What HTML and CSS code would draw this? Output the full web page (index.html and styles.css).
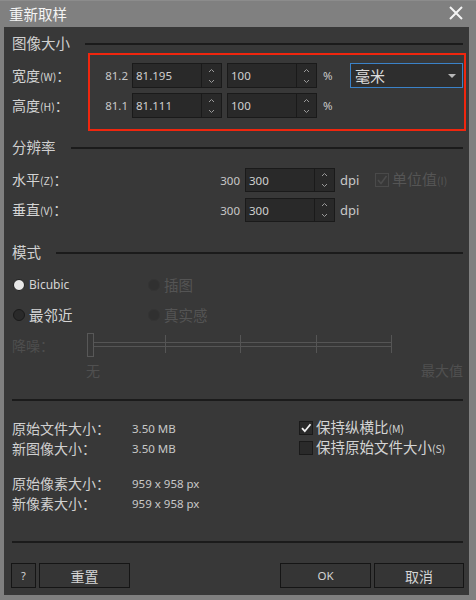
FILE: index.html
```html
<!DOCTYPE html>
<html lang="zh-CN">
<head>
<meta charset="utf-8">
<title>重新取样</title>
<link rel="stylesheet" href="styles.css">
</head>
<body>
<div class="window">
  <div class="titlebar">
    <span class="title">重新取样</span>
    <svg class="close" width="14" height="14" viewBox="0 0 14 14"><path d="M1 1 L13 13 M13 1 L1 13" stroke="#f4f4f4" stroke-width="2" fill="none"/></svg>
  </div>
  <div class="panel">
    <section class="sec sec-size">
      <div class="sec-head">图像大小</div>
      <div class="row row-size first">
        <div class="lbl lbl-size">宽度<small>(W)</small>：</div>
        <div class="orig">81.2</div>
        <div class="spin"><span class="val">81.195</span><span class="arrows"><svg width="7" height="18" viewBox="0 0 7 18"><path d="M1 5 L3.5 2.5 L6 5" stroke="#9a9a9a" fill="none"/><path d="M1 13 L3.5 15.5 L6 13" stroke="#9a9a9a" fill="none"/></svg></span></div>
        <div class="spin pct"><span class="val">100</span><span class="arrows"><svg width="7" height="18" viewBox="0 0 7 18"><path d="M1 5 L3.5 2.5 L6 5" stroke="#9a9a9a" fill="none"/><path d="M1 13 L3.5 15.5 L6 13" stroke="#9a9a9a" fill="none"/></svg></span></div>
        <div class="unit">%</div>
        <div class="select"><span>毫米</span><svg width="8" height="4" viewBox="0 0 8 4"><path d="M0 0 H8 L4 4 Z" fill="#b8b8b8"/></svg></div>
      </div>
      <div class="row row-size second">
        <div class="lbl lbl-size">高度<small>(H)</small>：</div>
        <div class="orig">81.1</div>
        <div class="spin"><span class="val">81.111</span><span class="arrows"><svg width="7" height="18" viewBox="0 0 7 18"><path d="M1 5 L3.5 2.5 L6 5" stroke="#9a9a9a" fill="none"/><path d="M1 13 L3.5 15.5 L6 13" stroke="#9a9a9a" fill="none"/></svg></span></div>
        <div class="spin pct"><span class="val">100</span><span class="arrows"><svg width="7" height="18" viewBox="0 0 7 18"><path d="M1 5 L3.5 2.5 L6 5" stroke="#9a9a9a" fill="none"/><path d="M1 13 L3.5 15.5 L6 13" stroke="#9a9a9a" fill="none"/></svg></span></div>
        <div class="unit">%</div>
      </div>
      <div class="highlight"></div>
    </section>

    <section class="sec sec-res">
      <div class="sec-head">分辨率</div>
      <div class="row row-res first">
        <div class="lbl lbl-res">水平<small>(Z)</small>：</div>
        <div class="orig">300</div>
        <div class="spin"><span class="val">300</span><span class="arrows"><svg width="7" height="18" viewBox="0 0 7 18"><path d="M1 5 L3.5 2.5 L6 5" stroke="#9a9a9a" fill="none"/><path d="M1 13 L3.5 15.5 L6 13" stroke="#9a9a9a" fill="none"/></svg></span></div>
        <div class="unit dpi">dpi</div>
        <div class="check disabled"><span class="box"><svg width="12" height="12" viewBox="0 0 12 12"><path d="M2 6 L5 9.5 L10.5 2" stroke="#4c4c4c" stroke-width="1.6" fill="none"/></svg></span><span>单位值<small>(I)</small></span></div>
      </div>
      <div class="row row-res second">
        <div class="lbl lbl-res">垂直<small>(V)</small>：</div>
        <div class="orig">300</div>
        <div class="spin"><span class="val">300</span><span class="arrows"><svg width="7" height="18" viewBox="0 0 7 18"><path d="M1 5 L3.5 2.5 L6 5" stroke="#9a9a9a" fill="none"/><path d="M1 13 L3.5 15.5 L6 13" stroke="#9a9a9a" fill="none"/></svg></span></div>
        <div class="unit dpi">dpi</div>
      </div>
    </section>

    <section class="sec sec-mode">
      <div class="sec-head">模式</div>
      <div class="radio-row r1">
        <div class="radio-item"><span class="radio on"></span><span class="latin">Bicubic</span></div>
        <div class="radio-item disabled"><span class="radio"></span><span>插图</span></div>
      </div>
      <div class="radio-row r2">
        <div class="radio-item big"><span class="radio"></span><span>最邻近</span></div>
        <div class="radio-item disabled"><span class="radio"></span><span>真实感</span></div>
      </div>
      <div class="slider-row">
        <div class="lbl-noise">降噪：</div>
        <svg class="slider" width="306" height="24" viewBox="0 0 306 24">
          <rect x="0.5" y="0.5" width="6" height="23" fill="none" stroke="#585858"/>
          <path d="M7 9.5 H304 M7 13.5 H304" stroke="#555" fill="none"/>
          <path d="M78.5 2 V20 M153.5 2 V20 M229.5 2 V20 M304.5 2 V20" stroke="#555" fill="none"/>
        </svg>
      </div>
      <div class="scale-row"><span>无</span><span>最大值</span></div>
    </section>

    <div class="divider div-info"></div>

    <section class="info">
      <div class="info-row i1">
        <span class="ilbl">原始文件大小：</span><span class="ival">3.50 MB</span>
        <div class="check"><span class="box"><svg width="12" height="12" viewBox="0 0 12 12"><path d="M2 6.2 L4.8 9.2 L10.5 2.2" stroke="#f2f2f2" stroke-width="1.8" fill="none"/></svg></span><span>保持纵横比<small>(M)</small></span></div>
      </div>
      <div class="info-row i2">
        <span class="ilbl">新图像大小：</span><span class="ival">3.50 MB</span>
        <div class="check"><span class="box"></span><span>保持原始文件大小<small>(S)</small></span></div>
      </div>
      <div class="info-row i3">
        <span class="ilbl">原始像素大小：</span><span class="ival">959 x 958 px</span>
      </div>
      <div class="info-row i4">
        <span class="ilbl">新像素大小：</span><span class="ival">959 x 958 px</span>
      </div>
    </section>

    <div class="divider div-bottom"></div>

    <div class="buttons">
      <button class="btn help">?</button>
      <button class="btn reset">重置</button>
      <span class="spacer"></span>
      <button class="btn ok">OK</button>
      <button class="btn cancel">取消</button>
    </div>
  </div>
</div>
</body>
</html>
```

FILE: styles.css
```css
* { box-sizing: border-box; }
html, body { margin: 0; padding: 0; }
body {
  background: #808080;
  font-family: "Noto Sans CJK SC", "Noto Sans", sans-serif;
  color: #d2d2d2;
}
.window {
  width: 476px;
  height: 600px;
  background: #808080;
}
.titlebar {
  height: 27px;
  display: flex;
  align-items: center;
  justify-content: space-between;
  padding: 0 13px 0 9px;
  border-top: 1px solid #8c8c8c;
}
.title {
  font-size: 14.5px;
  color: #f4f4f4;
  line-height: 20px;
}
.close { display: block; margin-top: -2px; }

.panel {
  margin-left: 4px;
  width: 465px;
  height: 568px;
  background: #383838;
  padding: 6px 6px 0 8px;
}
.sec { position: relative; }
.sec-head {
  height: 20px;
  display: flex;
  align-items: center;
  gap: 15px;
  font-size: 14.5px;
  line-height: 20px;
  color: #d0d0d0;
}
.sec-head::after {
  content: "";
  flex: 1;
  height: 2px;
  background: #1b1b1b;
  margin-top: 1px;
}
.sec-res { margin-top: 19px; }
.sec-mode { margin-top: 20px; }

.row { display: flex; align-items: center; }
.row-size { height: 25px; }
.row-size.first { margin-top: 10px; }
.row-size.second { margin-top: 5px; }
.row-res { height: 24px; }
.row-res.first { margin-top: 11px; }
.row-res.second { margin-top: 6px; }

.lbl {
  font-size: 14px;
  line-height: 20px;
  color: #d4d4d4;
  white-space: nowrap;
}
.lbl small, .check small { font-size: 10.5px; }
.lbl-size { width: 76px; }
.lbl-res { width: 188px; }
.orig {
  width: 40px;
  text-align: right;
  font-family: "Noto Sans", sans-serif;
  font-size: 11.5px;
  color: #c8c8c8;
  margin-right: 4px;
}
.row-res .orig { margin-right: 5px; }
.spin {
  width: 90px;
  height: 100%;
  display: flex;
  background: #292929;
  border: 1px solid #1a1a1a;
}
.spin.pct { margin-left: 5px; }
.spin .val {
  flex: 1;
  display: flex;
  align-items: center;
  padding-left: 3px;
  font-family: "Noto Sans", sans-serif;
  font-size: 11.5px;
  color: #d0d0d0;
}
.spin .arrows {
  width: 20px;
  border-left: 1px solid #1a1a1a;
  display: flex;
  align-items: center;
  justify-content: center;
}
.spin .arrows svg { display: block; }
.unit {
  width: 33px;
  padding-left: 6px;
  font-family: "Noto Sans", sans-serif;
  font-size: 11.5px;
  color: #c8c8c8;
}
.unit.dpi { width: 40px; padding-left: 5px; font-size: 13px; }
.select {
  width: 113px;
  height: 25px;
  border: 1px solid #3b82c8;
  background: #2e2e2e;
  display: flex;
  align-items: center;
  justify-content: space-between;
  padding: 0 6px 0 4px;
  font-size: 15px;
  color: #dcdcdc;
}
.highlight {
  position: absolute;
  left: 76px;
  top: 20px;
  width: 378px;
  height: 78px;
  border: 2px solid #f0260e;
  pointer-events: none;
}

.check {
  display: flex;
  align-items: center;
  gap: 3px;
  font-size: 14.5px;
  line-height: 20px;
  color: #d4d4d4;
  white-space: nowrap;
}
.check .box {
  width: 14px;
  height: 14px;
  border: 1px solid #1a1a1a;
  background: #2a2a2a;
  display: flex;
  align-items: center;
  justify-content: center;
}
.check.disabled { color: #555; font-size: 15px; }
.check.disabled .box { border-color: #4a4a4a; background: transparent; }

.radio-row { display: flex; height: 18px; align-items: center; }
.radio-row.r1 { margin-top: 14px; }
.radio-row.r2 { margin-top: 12px; }
.radio-item {
  display: flex;
  align-items: center;
  gap: 4px;
  width: 135px;
  padding-left: 1px;
  font-size: 14.5px;
  line-height: 18px;
  color: #d4d4d4;
}
.radio-item .latin { font-family: "Noto Sans", sans-serif; font-size: 12px; }
.radio {
  width: 12px;
  height: 12px;
  border-radius: 50%;
  background: #2a2a2a;
  border: 1px solid #1a1a1a;
  flex: none;
}
.radio.on {
  background: #e8e8e8;
  border: 1.5px solid #1e1e1e;
}
.radio-item.disabled { color: #545454; }
.radio-item.disabled .radio { background: #303030; border-color: #343434; }

.slider-row {
  display: flex;
  align-items: center;
  height: 24px;
  margin-top: 9px;
}
.lbl-noise {
  width: 75px;
  font-size: 14px;
  color: #4e4e4e;
  align-self: flex-start;
  margin-top: 2px;
}
.slider { display: block; }
.scale-row {
  display: flex;
  justify-content: space-between;
  height: 16px;
  margin-top: 5px;
  padding-left: 74px;
  font-size: 14px;
  line-height: 16px;
  color: #505050;
}

.divider { height: 2px; background: #1b1b1b; }
.div-info { margin-top: 21px; }
.div-bottom { margin-top: 29px; }

.info-row {
  display: flex;
  align-items: center;
  height: 18px;
}
.info-row.i1 { margin-top: 18px; }
.info-row.i2 { margin-top: 2px; }
.info-row.i3 { margin-top: 17px; }
.info-row.i4 { margin-top: 2px; }
.ilbl {
  width: 120px;
  font-size: 14px;
  line-height: 18px;
  color: #d0d0d0;
  white-space: nowrap;
}
.ival {
  width: 167px;
  font-family: "Noto Sans", sans-serif;
  font-size: 11.5px;
  color: #c8c8c8;
}

.buttons {
  display: flex;
  align-items: center;
  height: 25px;
  margin-top: 20px;
  margin-left: -1px;
  gap: 3px;
}
.spacer { flex: 1; }
.btn {
  height: 25px;
  background: #353535;
  border: 1px solid #151515;
  color: #d4d4d4;
  font-family: "Noto Sans CJK SC", "Noto Sans", sans-serif;
  font-size: 14px;
  padding: 0;
  line-height: 20px;
}
.btn.help { width: 25px; font-size: 11px; font-family: "Noto Sans", sans-serif; }
.btn.reset { width: 91px; }
.btn.ok { width: 91px; font-family: "Noto Sans", sans-serif; font-size: 11.5px; }
.btn.cancel { width: 90px; margin-right: -1px; }
```
